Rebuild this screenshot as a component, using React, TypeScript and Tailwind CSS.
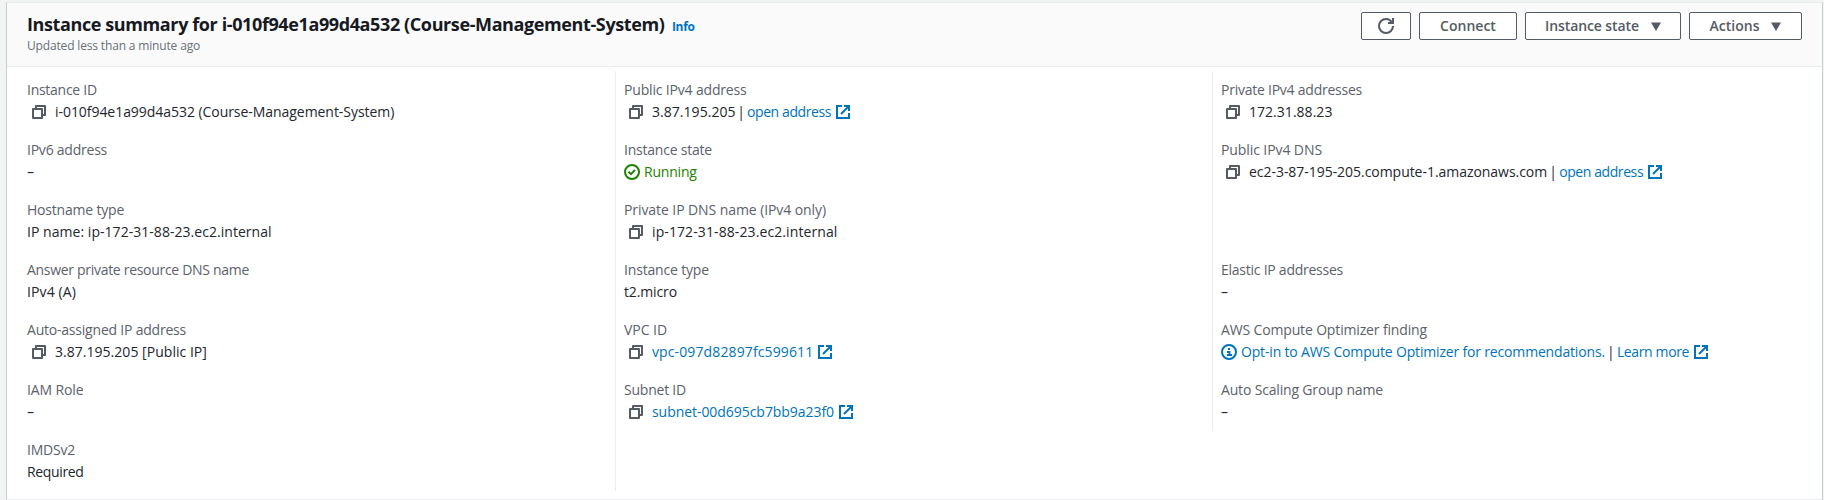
import type { ReactNode } from "react";

function CopyIcon() {
  return (
    <svg className="ml-1 mr-2 h-4 w-4 shrink-0 fill-none stroke-[#545b64] stroke-2" viewBox="0 0 16 16">
      <path d="M2 5h9v9H2z" strokeLinejoin="round" />
      <path d="M5 5V2h9v9h-3" strokeLinejoin="round" />
    </svg>
  );
}

function ExternalIcon() {
  return (
    <svg className="ml-1 h-4 w-4 shrink-0 fill-none stroke-[#0073bb] stroke-2" viewBox="0 0 16 16">
      <path d="M7 2H2v12h12V9" />
      <path d="M9 2h5v5" />
      <path d="M6 10l7.5-7.5" />
    </svg>
  );
}

function CheckIcon() {
  return (
    <svg className="mr-1 h-4 w-4 shrink-0 fill-none stroke-[#1d8102] stroke-2" viewBox="0 0 16 16">
      <circle cx="8" cy="8" r="7" />
      <path d="M4.5 7.7l2.5 2.4 4-4.2" />
    </svg>
  );
}

function InfoIcon() {
  return (
    <svg className="mr-1 h-4 w-4 shrink-0 fill-none stroke-[#0073bb] stroke-2" viewBox="0 0 16 16">
      <circle cx="8" cy="8" r="7" />
      <path d="M6 11h5M8.5 11V8H6M7 5h2" strokeWidth="1.8" />
    </svg>
  );
}

function RefreshIcon() {
  return (
    <svg className="h-4 w-4 fill-none stroke-[#545b64] stroke-2" viewBox="0 0 16 16">
      <path d="M15 8a7 7 0 1 1-7-7c2.8 0 5 1.6 6 4" />
      <path d="M10 5h5V0" />
    </svg>
  );
}

function Caret() {
  return (
    <svg className="ml-3 h-[9px] w-[10px] fill-[#545b64]" viewBox="0 0 10 9">
      <path d="M0 .5h10L5 9z" />
    </svg>
  );
}

function Button({ width, children }: { width: string; children: ReactNode }) {
  return (
    <button
      className={`${width} flex h-7 items-center justify-center whitespace-pre rounded-[2px] border border-[#545b64] bg-white text-sm leading-[22px] font-semibold text-[#545b64]`}
    >
      {children}
    </button>
  );
}

function Item({ label, tracking, children }: { label: string; tracking: string; children: ReactNode }) {
  return (
    <div className="h-[60px] py-2 pl-2">
      <div className={`${tracking} text-[#5b626b]`}>{label}</div>
      <div className="flex h-[22px] items-center text-[#23262c]">{children}</div>
    </div>
  );
}

function Link({ tracking, children }: { tracking: string; children: ReactNode }) {
  return (
    <a href="#" className={`${tracking} text-[#0073bb]`}>
      {children}
    </a>
  );
}

function Bar() {
  return (
    <span className="mx-[5px] flex w-[2px] justify-center">
      <span>|</span>
    </span>
  );
}

export default function App() {
  return (
    <div className="h-[500px] w-[1824px] overflow-hidden bg-[#f2f3f3] pt-[2px] pl-[6px] font-['Open_Sans','Noto_Sans',sans-serif] text-sm leading-[22px]">
      <section className="flex h-[498px] w-[1817px] flex-col border border-t-[#eaeded] border-r-[#c6cfcf] border-b-[#eaeded] border-l-[#c6cfcf] bg-white">
        <header className="flex h-16 shrink-0 justify-between border-b border-[#eaeded] bg-[#fafafa] pt-[9px] pr-5 pl-5">
          <div className="whitespace-nowrap pt-px">
            <div className="flex items-baseline">
              <h1 className="w-[645px] text-lg leading-[22px] font-bold tracking-[-0.39px] text-[#16191f]">
                Instance summary for i-010f94e1a99d4a532 (Course-Management-System)
              </h1>
              <a href="#" className="text-xs leading-[22px] font-bold tracking-[-0.36px] text-[#0073bb]">
                Info
              </a>
            </div>
            <p className="text-xs leading-4 tracking-[-0.16px] text-[#687078]">Updated less than a minute ago</p>
          </div>
          <div className="flex gap-2">
            <Button width="w-[50px]">
              <RefreshIcon />
            </Button>
            <Button width="w-[98px]">Connect</Button>
            <Button width="w-[156px]">
              <span className="tracking-[-0.1px]">Instance state</span>
              <Caret />
            </Button>
            <Button width="w-[113px]">
              Actions
              <Caret />
            </Button>
          </div>
        </header>

        <div className="flex items-start whitespace-nowrap pt-1 pl-3">
          <div className="w-[596px] shrink-0">
            <Item label="Instance ID" tracking="tracking-[-0.27px]">
              <CopyIcon />
              <span className="tracking-[-0.05px]">i-010f94e1a99d4a532 (Course-Management-System)</span>
            </Item>
            <Item label="IPv6 address" tracking="tracking-[-0.23px]">–</Item>
            <Item label="Hostname type" tracking="tracking-[-0.2px]">
              <span className="tracking-[0.04px]">IP name: ip-172-31-88-23.ec2.internal</span>
            </Item>
            <Item label="Answer private resource DNS name" tracking="tracking-[-0.3px]">
              <span className="tracking-[0.12px]">IPv4 (A)</span>
            </Item>
            <Item label="Auto-assigned IP address" tracking="tracking-[-0.21px]">
              <CopyIcon />
              <span className="tracking-[0.03px]">3.87.195.205 [Public IP]</span>
            </Item>
            <Item label="IAM Role" tracking="tracking-[-0.12px]">–</Item>
            <Item label="IMDSv2" tracking="tracking-[-0.22px]">
              <span className="tracking-[-0.36px]">Required</span>
            </Item>
          </div>

          <div className="w-[597px] shrink-0 border-l border-[#eaeded]">
            <Item label="Public IPv4 address" tracking="tracking-[-0.17px]">
              <CopyIcon />
              <span className="w-[83px] tracking-[0.04px]">3.87.195.205</span>
              <Bar />
              <Link tracking="tracking-[-0.41px]">open address</Link>
              <ExternalIcon />
            </Item>
            <Item label="Instance state" tracking="tracking-[-0.22px]">
              <CheckIcon />
              <span className="tracking-[-0.2px] text-[#1d8102]">Running</span>
            </Item>
            <Item label="Private IP DNS name (IPv4 only)" tracking="tracking-[-0.08px]">
              <CopyIcon />
              <span className="tracking-[0.1px]">ip-172-31-88-23.ec2.internal</span>
            </Item>
            <Item label="Instance type" tracking="tracking-[-0.17px]">
              <span className="tracking-[-0.13px]">t2.micro</span>
            </Item>
            <Item label="VPC ID" tracking="tracking-[-0.05px]">
              <CopyIcon />
              <Link tracking="tracking-[0.12px]">vpc-097d82897fc599611</Link>
              <ExternalIcon />
            </Item>
            <Item label="Subnet ID" tracking="tracking-[-0.22px]">
              <CopyIcon />
              <Link tracking="tracking-[-0.05px]">subnet-00d695cb7bb9a23f0</Link>
              <ExternalIcon />
            </Item>
            <div className="h-[60px]" />
          </div>

          <div className="w-[600px] shrink-0 border-l border-[#eaeded]">
            <Item label="Private IPv4 addresses" tracking="tracking-[-0.24px]">
              <CopyIcon />
              <span className="tracking-[0.03px]">172.31.88.23</span>
            </Item>
            <Item label="Public IPv4 DNS" tracking="tracking-[-0.09px]">
              <CopyIcon />
              <span className="tracking-[-0.04px]">ec2-3-87-195-205.compute-1.amazonaws.com</span>
              <Bar />
              <Link tracking="tracking-[-0.41px]">open address</Link>
              <ExternalIcon />
            </Item>
            <div className="h-[60px]" />
            <Item label="Elastic IP addresses" tracking="tracking-[-0.25px]">–</Item>
            <Item label="AWS Compute Optimizer finding" tracking="tracking-[-0.15px]">
              <InfoIcon />
              <Link tracking="tracking-[-0.17px]">Opt-in to AWS Compute Optimizer for recommendations.</Link>
              <Bar />
              <Link tracking="tracking-[-0.37px]">Learn more</Link>
              <ExternalIcon />
            </Item>
            <Item label="Auto Scaling Group name" tracking="tracking-[-0.17px]">–</Item>
          </div>
        </div>
      </section>
    </div>
  );
}
